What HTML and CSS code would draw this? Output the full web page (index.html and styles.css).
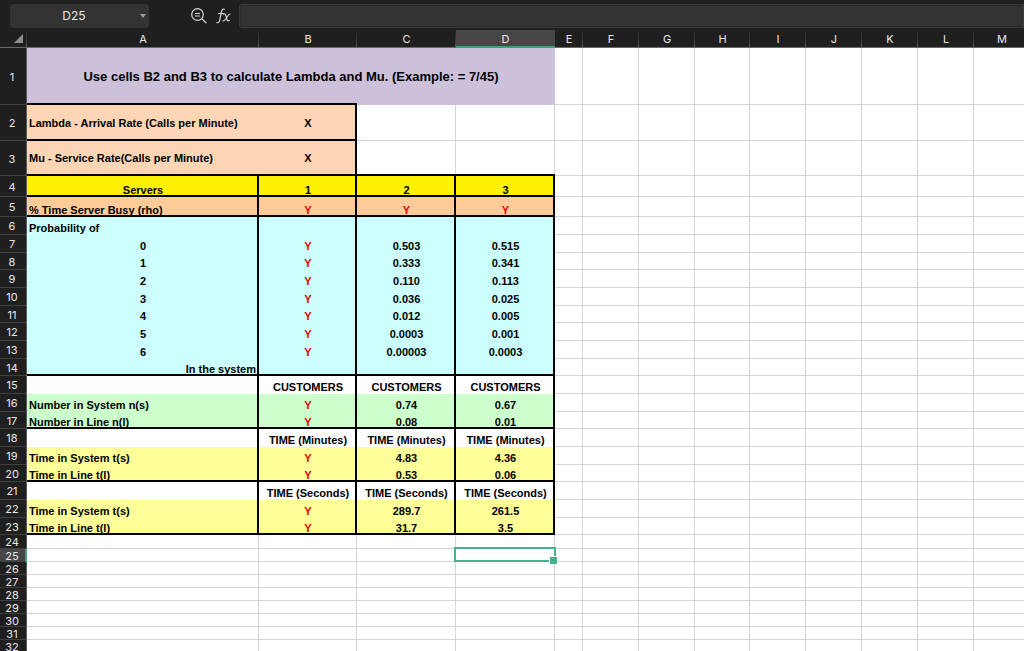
FILE: index.html
```
<!DOCTYPE html>
<html lang="en">
<head>
<meta charset="utf-8">
<title>Queueing calculator</title>
<link rel="stylesheet" href="styles.css">
</head>
<body>
<header class="toolbar">
  <div class="namebox">
    <input class="namebox-input" type="text" value="D25" aria-label="Name box">
    <button class="namebox-arrow" type="button" aria-label="Show names"><svg width="6" height="4" viewBox="0 0 6 4"><path d="M0 0h6L3 4z" fill="#9a9a9a"/></svg></button>
  </div>
  <button class="tool" type="button" aria-label="Zoom out"><svg width="17" height="16" viewBox="0 0 17 16" fill="none" stroke="#d4d4d4" stroke-width="1.2"><circle cx="6.500" cy="6.500" r="5.800"/><path d="M10.800 10.800 15.500 15.200M4 5.500h5M4 8h5"/></svg></button>
  <button class="tool" type="button" aria-label="Insert function"><svg width="15" height="16" viewBox="0 0 15 16" fill="none" stroke="#d4d4d4" stroke-width="1.2" stroke-linecap="round"><path d="M8.3 1.3C6.800.6 5.900 1.600 5.500 3.500L3.700 12.200C3.300 14.300 2.300 15.200.8 14.500M2.500 5.500H7.300"/><path d="M7.500 6.200C9.600 5.200 9.800 7 10.300 9C10.800 11.500 11.300 13.500 13.300 12.500M14 6C12 5.500 10 13 7 13"/></svg></button>
  <input class="formula" type="text" aria-label="Formula bar">
</header>
<main class="sheet">
<table class="grid">
<colgroup><col class="c-num"><col class="c-a"><col class="c-b"><col class="c-c"><col class="c-c"><col class="c-e"><col class="c-f"><col class="c-f"><col class="c-h"><col class="c-f"><col class="c-f"><col class="c-f"><col class="c-f"><col class="c-f"></colgroup>
<thead>
<tr><th class="corner"><svg width="9" height="9" viewBox="0 0 9 9"><path d="M9 0v9H0z" fill="#8e8e8e"/></svg></th><th>A</th><th>B</th><th>C</th><th class="active">D</th><th>E</th><th>F</th><th>G</th><th>H</th><th>I</th><th>J</th><th>K</th><th>L</th><th>M</th></tr>
</thead>
<tbody>
<tr class="h57 mid"><th>1</th><td class="title" colspan="4"><b>Use cells B2 and B3 to calculate Lambda and Mu. (Example: = 7/45)</b></td><td><td><td><td><td><td><td><td><td><td></tr>
<tr class="h36 mid peach end first"><th>2</th><td class="k left open"><b>Lambda - Arrival Rate (Calls per Minute)</b></td><td class="k"><b>X</b></td><td><td><td><td><td><td><td><td><td><td><td></tr>
<tr class="h35 mid peach end"><th>3</th><td class="k left open"><b>Mu - Service Rate(Calls per Minute)</b></td><td class="k"><b>X</b></td><td class="over"><td class="over"><td><td><td><td><td><td><td><td><td></tr>
<tr class="h21 yellow end"><th>4</th><td class="k"><b>Servers</b></td><td class="k"><b>1</b></td><td class="k"><b>2</b></td><td class="k"><b>3</b></td><td><td><td><td><td><td><td><td><td></tr>
<tr class="h20 orange end"><th>5</th><td class="k left"><b>% Time Server Busy (rho)</b></td><td class="k red"><b>Y</b></td><td class="k red"><b>Y</b></td><td class="k red"><b>Y</b></td><td><td><td><td><td><td><td><td><td></tr>
<tr class="h18 cyan"><th>6</th><td class="k left"><b>Probability of</b></td><td class="k"></td><td class="k"></td><td class="k"></td><td><td><td><td><td><td><td><td><td></tr>
<tr class="h18 cyan"><th>7</th><td class="k"><b>0</b></td><td class="k red"><b>Y</b></td><td class="k"><b>0.503</b></td><td class="k"><b>0.515</b></td><td><td><td><td><td><td><td><td><td></tr>
<tr class="h17 cyan"><th>8</th><td class="k"><b>1</b></td><td class="k red"><b>Y</b></td><td class="k"><b>0.333</b></td><td class="k"><b>0.341</b></td><td><td><td><td><td><td><td><td><td></tr>
<tr class="h18 cyan"><th>9</th><td class="k"><b>2</b></td><td class="k red"><b>Y</b></td><td class="k"><b>0.110</b></td><td class="k"><b>0.113</b></td><td><td><td><td><td><td><td><td><td></tr>
<tr class="h18 cyan"><th>10</th><td class="k"><b>3</b></td><td class="k red"><b>Y</b></td><td class="k"><b>0.036</b></td><td class="k"><b>0.025</b></td><td><td><td><td><td><td><td><td><td></tr>
<tr class="h17 cyan"><th>11</th><td class="k"><b>4</b></td><td class="k red"><b>Y</b></td><td class="k"><b>0.012</b></td><td class="k"><b>0.005</b></td><td><td><td><td><td><td><td><td><td></tr>
<tr class="h18 cyan"><th>12</th><td class="k"><b>5</b></td><td class="k red"><b>Y</b></td><td class="k"><b>0.0003</b></td><td class="k"><b>0.001</b></td><td><td><td><td><td><td><td><td><td></tr>
<tr class="h18 cyan"><th>13</th><td class="k"><b>6</b></td><td class="k red"><b>Y</b></td><td class="k"><b>0.00003</b></td><td class="k"><b>0.0003</b></td><td><td><td><td><td><td><td><td><td></tr>
<tr class="h17 cyan end"><th>14</th><td class="k right"><b>In the system</b></td><td class="k"></td><td class="k"></td><td class="k"></td><td><td><td><td><td><td><td><td><td></tr>
<tr class="h18"><th>15</th><td class="k"></td><td class="k"><b>CUSTOMERS</b></td><td class="k"><b>CUSTOMERS</b></td><td class="k"><b>CUSTOMERS</b></td><td><td><td><td><td><td><td><td><td></tr>
<tr class="h18 green"><th>16</th><td class="k left"><b>Number in System n(s)</b></td><td class="k red"><b>Y</b></td><td class="k"><b>0.74</b></td><td class="k"><b>0.67</b></td><td><td><td><td><td><td><td><td><td></tr>
<tr class="h17 green end"><th>17</th><td class="k left"><b>Number in Line n(l)</b></td><td class="k red"><b>Y</b></td><td class="k"><b>0.08</b></td><td class="k"><b>0.01</b></td><td><td><td><td><td><td><td><td><td></tr>
<tr class="h18"><th>18</th><td class="k"></td><td class="k"><b>TIME (Minutes)</b></td><td class="k"><b>TIME (Minutes)</b></td><td class="k"><b>TIME (Minutes)</b></td><td><td><td><td><td><td><td><td><td></tr>
<tr class="h18 pale"><th>19</th><td class="k left"><b>Time in System t(s)</b></td><td class="k red"><b>Y</b></td><td class="k"><b>4.83</b></td><td class="k"><b>4.36</b></td><td><td><td><td><td><td><td><td><td></tr>
<tr class="h17 pale end"><th>20</th><td class="k left"><b>Time in Line t(l)</b></td><td class="k red"><b>Y</b></td><td class="k"><b>0.53</b></td><td class="k"><b>0.06</b></td><td><td><td><td><td><td><td><td><td></tr>
<tr class="h18"><th>21</th><td class="k"></td><td class="k"><b>TIME (Seconds)</b></td><td class="k"><b>TIME (Seconds)</b></td><td class="k"><b>TIME (Seconds)</b></td><td><td><td><td><td><td><td><td><td></tr>
<tr class="h18 pale"><th>22</th><td class="k left"><b>Time in System t(s)</b></td><td class="k red"><b>Y</b></td><td class="k"><b>289.7</b></td><td class="k"><b>261.5</b></td><td><td><td><td><td><td><td><td><td></tr>
<tr class="h17 pale end"><th>23</th><td class="k left"><b>Time in Line t(l)</b></td><td class="k red"><b>Y</b></td><td class="k"><b>31.7</b></td><td class="k"><b>3.5</b></td><td><td><td><td><td><td><td><td><td></tr>
<tr class="h14"><th>24</th><td><td><td><td><td><td><td><td><td><td><td><td><td></tr>
<tr><th class="active">25</th><td><td><td><td class="selected"><td><td><td><td><td><td><td><td><td></tr>
<tr><th>26</th><td><td><td><td><td><td><td><td><td><td><td><td><td></tr>
<tr><th>27</th><td><td><td><td><td><td><td><td><td><td><td><td><td></tr>
<tr><th>28</th><td><td><td><td><td><td><td><td><td><td><td><td><td></tr>
<tr><th>29</th><td><td><td><td><td><td><td><td><td><td><td><td><td></tr>
<tr><th>30</th><td><td><td><td><td><td><td><td><td><td><td><td><td></tr>
<tr><th>31</th><td><td><td><td><td><td><td><td><td><td><td><td><td></tr>
<tr><th>32</th><td><td><td><td><td><td><td><td><td><td><td><td><td></tr>
</tbody>
</table>
</main>
</body>
</html>
```
FILE: styles.css
```
* { box-sizing: border-box; }

body {
  margin: 0;
  height: 100vh;
  display: flex;
  flex-direction: column;
  overflow: hidden;
  background: #1f1f1f;
  font-family: "Liberation Sans", Arial, sans-serif;
}

button, input {
  border: 0;
  padding: 0;
  margin: 0;
  background: none;
  color: #e8e8e8;
  font: 12px/16px Inter, sans-serif;
}

/* Toolbar */
.toolbar {
  flex: none;
  display: flex;
  align-items: center;
  height: 30px;
  padding: 2px 0 0 10px;
}
.namebox {
  display: flex;
  align-items: center;
  width: 139px;
  height: 24px;
  margin-right: 42px;
  padding-right: 3px;
  border-radius: 4px;
  background: #333;
}
.namebox-input {
  flex: 1;
  min-width: 0;
  padding-right: 2px;
  text-align: center;
}
.namebox-arrow { display: flex; }
.tool { display: flex; margin-right: 8px; }
.formula {
  flex: 1;
  min-width: 0;
  height: 24px;
  border: 2px solid #292929;
  border-right: 0;
  border-radius: 3px 0 0 3px;
  outline: 1px solid #3a3a3a;
  outline-offset: -1px;
  background: #333;
}

/* Sheet */
.sheet { flex: 1; min-height: 0; overflow: hidden; }
.grid {
  width: 1030px;
  table-layout: fixed;
  border-collapse: separate;
  border-spacing: 0;
}
.c-num { width: 27px; }
.c-a { width: 232px; }
.c-b { width: 98px; }
.c-c { width: 99px; }
.c-e { width: 28px; }
.c-f { width: 56px; }
.c-h { width: 55px; }

th {
  padding: 0;
  background: #1f1f1f;
  color: #e8e8e8;
  font: 11px/12px Inter, sans-serif;
  vertical-align: middle;
}
thead th {
  height: 18px;
  border-bottom: 1px solid #6a6a6a;
  background: linear-gradient(#1f1f1f, #555) right / 1px 100% no-repeat #1f1f1f;
}
thead th.active { background: #464646; border-bottom: 1px solid #3aa17b; box-shadow: inset 0 -1px 0 #3aa17b; }
thead .corner { padding: 0 4px 0 0; text-align: right; }
.corner svg { display: block; margin-left: auto; }
tbody th {
  padding-right: 2px;
  border-right: 1px solid #5a5a5a;
  box-shadow: inset 0 -1px 0 #404040;
}
tbody th.active { padding-right: 1px; background: #464646; border-right: 2px solid #3aa17b; }

tr { height: 13px; }
.h14 { height: 14px; }
.h17 { height: 17px; }
.h18 { height: 18px; }
.h20 { height: 20px; }
.h21 { height: 21px; }
.h35 { height: 35px; }
.h36 { height: 36px; }
.h57 { height: 57px; }

/* Grid lines are inset shadows so that text may reach the cell's edge */
td {
  --side: -1px;
  --foot: -1px;
  --line: #d4d4d4;
  padding: 0;
  background: #fff;
  box-shadow: inset var(--side) 0 0 var(--line), inset 0 var(--foot) 0 var(--line);
  color: #000;
  font-size: 11px;
  text-align: center;
  vertical-align: bottom;
}
td b {
  display: block;
  height: 15px;
  line-height: 16px;
  overflow: hidden;
  white-space: nowrap;
}
.mid td { vertical-align: middle; }
.mid b { line-height: 14px; }
.k { --line: #000; --side: -2px; --foot: 0; }
.end .k { --foot: -2px; }
.k.open { --side: 0; }
.first .k {
  box-shadow: inset var(--side) 0 0 #000, inset 0 var(--foot) 0 #000, 0 -2px 0 #000;
}
.over { box-shadow: inset 0 -2px 0 #000, inset -1px 0 0 #d4d4d4; }
.left { padding-left: 2px; text-align: left; }
.right { padding-right: 3px; text-align: right; }
.red { color: #e60000; }

.title { background: #ccc0da; box-shadow: none; }
.title b { height: 18px; line-height: 18px; font-size: 13px; }
.peach .k { background: #fcd5b4; }
.yellow .k { background: #fff200; }
.orange .k { background: #ffcc99; }
.cyan .k { background: #ccffff; }
.green .k { background: #ccffcc; }
.pale .k { background: #ffff99; }

/* Selection frame with its fill handle */
.selected { position: relative; }
.selected::before {
  content: "";
  position: absolute;
  inset: -2px -1px 0 -2px;
  border: 2px solid #45b38a;
}
.selected::after {
  content: "";
  position: absolute;
  right: -3px;
  bottom: -3px;
  width: 7px;
  height: 7px;
  border: 1px solid #fff;
  background: #45b38a;
}
```
